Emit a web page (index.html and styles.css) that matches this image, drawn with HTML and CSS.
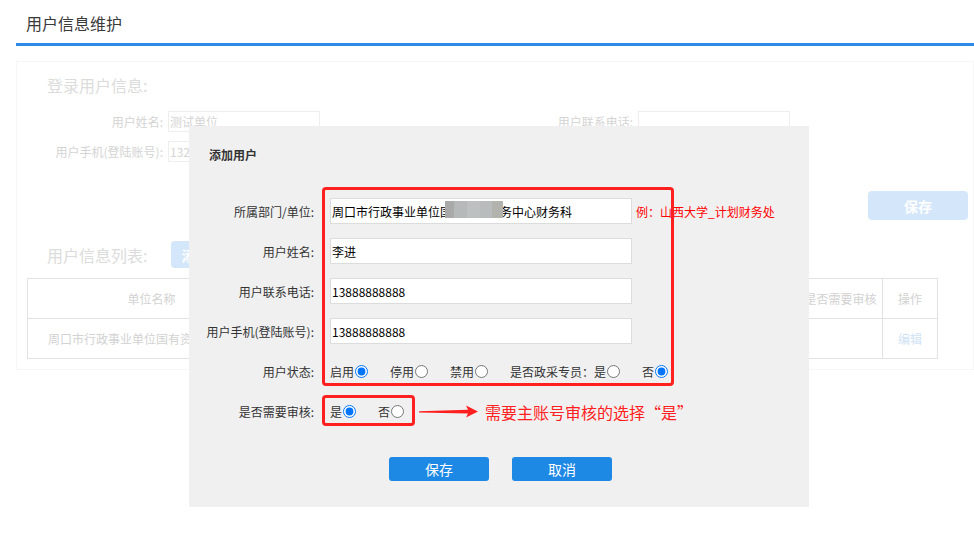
FILE: index.html
```html
<!DOCTYPE html>
<html lang="zh-CN">
<head>
<meta charset="utf-8">
<title>用户信息维护</title>
<link rel="stylesheet" href="styles.css">
</head>
<body>
<header class="page-head">
  <h1 class="page-title">用户信息维护</h1>
</header>

<section class="panel">
  <h2 class="sec-title">登录用户信息:</h2>
  <div class="login-grid">
    <span class="bg-label">用户姓名:</span>
    <input class="bg-input" type="text" value="测试单位">
    <span class="bg-label">用户联系电话:</span>
    <input class="bg-input" type="text" value="">
    <span class="bg-label">用户手机(登陆账号):</span>
    <input class="bg-input" type="text" value="13233333333">
  </div>
  <div class="save-row"><button class="btn-faded">保存</button></div>
  <div class="list-head">
    <h2 class="sec-title">用户信息列表:</h2>
    <button class="btn-faded btn-add">添加用户</button>
  </div>
  <table class="user-table">
    <colgroup>
      <col class="c-unit"><col><col><col><col class="c-audit"><col class="c-op">
    </colgroup>
    <thead>
      <tr><th>单位名称</th><th>用户姓名</th><th>联系电话</th><th>用户状态</th><th>是否需要审核</th><th>操作</th></tr>
    </thead>
    <tbody>
      <tr><td class="td-unit">周口市行政事业单位国有资产服务中心财务科</td><td>李进</td><td>13888888888</td><td>启用</td><td></td><td class="td-op">编辑</td></tr>
    </tbody>
  </table>
</section>

<div class="dialog">
  <h3 class="dlg-title">添加用户</h3>
  <div class="dlg-form">
    <div class="row">
      <span class="lbl">所属部门/单位:</span>
      <div class="field-wrap">
        <input class="field" type="text" value="周口市行政事业单位国有资产服务中心财务科">
        <span class="mosaic"><i class="m1"></i><i class="m2"></i><i class="m3"></i><i class="m4"></i><i class="m5"></i></span>
      </div>
      <span class="hint">例：山西大学_计划财务处</span>
    </div>
    <div class="row">
      <span class="lbl">用户姓名:</span>
      <input class="field" type="text" value="李进">
    </div>
    <div class="row">
      <span class="lbl">用户联系电话:</span>
      <input class="field" type="text" value="13888888888">
    </div>
    <div class="row">
      <span class="lbl">用户手机(登陆账号):</span>
      <input class="field" type="text" value="13888888888">
    </div>
    <div class="row">
      <span class="lbl">用户状态:</span>
      <div class="radios">
        <label class="opt">启用<input type="radio" name="st" checked></label>
        <label class="opt">停用<input type="radio" name="st"></label>
        <label class="opt">禁用<input type="radio" name="st"></label>
        <label class="opt">是否政采专员：是<input type="radio" name="zc"></label>
        <label class="opt">否<input type="radio" name="zc" checked></label>
      </div>
    </div>
    <div class="row">
      <span class="lbl">是否需要审核:</span>
      <div class="radios">
        <label class="opt">是<input type="radio" name="sh" checked></label>
        <label class="opt">否<input type="radio" name="sh"></label>
      </div>
    </div>
  </div>
  <div class="dlg-actions">
    <button class="btn">保存</button>
    <button class="btn">取消</button>
  </div>

  <div class="mark mark-a"></div>
  <div class="mark mark-b"></div>
  <svg class="arrow" width="60" height="16" viewBox="0 0 60 16"><polygon points="0,7.2 49,5.8 47,1.5 59,7.5 47,13.5 49,9.4 0,8.6" fill="#ff1f1f"/></svg>
  <span class="note">需要主账号审核的选择“是”</span>
</div>
</body>
</html>
```

FILE: styles.css
```css
* { box-sizing: border-box; }
html, body { margin: 0; padding: 0; }
body {
  width: 974px;
  height: 544px;
  overflow: hidden;
  position: relative;
  background: #fff;
  font-family: "Noto Sans CJK SC", "Microsoft YaHei", sans-serif;
  font-size: 12px;
  color: #333;
}

/* header */
.page-head {
  margin-left: 16px;
  height: 46px;
  border-bottom: 3px solid #2d8ae6;
  display: flex;
  align-items: center;
  padding: 2px 0 0 10px;
}
.page-title {
  margin: 0;
  font-size: 16px;
  font-weight: normal;
  line-height: 22px;
  color: #3a3a3a;
}

/* faded background panel */
.panel {
  margin: 15px 0 0 16px;
  height: 309px;
  border: 1px solid #f6f6f6;
  padding: 11px 5px 0 30px;
  color: #d6d6d6;
}
.sec-title {
  margin: 0;
  font-size: 16px;
  font-weight: normal;
  line-height: 24px;
  color: #dcdcdc;
}
.login-grid {
  margin: 14px 0 0 -30px;
  display: grid;
  grid-template-columns: 146px 152px 308px 152px;
  column-gap: 5px;
  row-gap: 9px;
  align-items: center;
}
.bg-label { text-align: right; color: #d4d4d4; white-space: nowrap; }
.bg-input {
  height: 21px;
  border: 1px solid #eeeeee;
  background: #fff;
  padding: 0 1px;
  font: inherit;
  color: #d4d4d4;
}
.save-row {
  display: flex;
  justify-content: flex-end;
  margin-top: 29px;
}
.btn-faded {
  width: 100px;
  height: 29px;
  border: 0;
  border-radius: 4px;
  background: #d4e7fa;
  color: #fff;
  font: bold 14px "Noto Sans CJK SC", sans-serif;
}
.list-head {
  margin-top: 21px;
  display: flex;
  align-items: center;
  gap: 24px;
}
.btn-add { width: auto; height: 27px; padding: 0 10px; }
.user-table {
  margin: 10px 0 0 -20px;
  width: 911px;
  border-collapse: collapse;
  table-layout: fixed;
  border: 1px solid #dddddd;
}
.c-unit { width: 248px; }
.c-audit { width: 84px; }
.c-op { width: 55px; }
.user-table th, .user-table td {
  height: 40px;
  border: 1px solid #e2e2e2;
  font-weight: normal;
  text-align: center;
  color: #d2d2d2;
  white-space: nowrap;
  overflow: hidden;
}
.user-table td.td-unit { text-align: left; padding-left: 20px; }
.user-table td.td-op { color: #cfe2f6; }

/* dialog */
.dialog {
  position: absolute;
  left: 189px;
  top: 126px;
  width: 620px;
  height: 381px;
  background: #f0f0f0;
  padding: 19px 0 0 0;
}
.dlg-title {
  margin: 0 0 0 20px;
  font-size: 12px;
  font-weight: bold;
  line-height: 20px;
  color: #333;
}
.dlg-form {
  margin-top: 33px;
  display: flex;
  flex-direction: column;
  gap: 14px;
}
.row {
  display: flex;
  align-items: center;
  height: 26px;
}
.lbl {
  width: 125px;
  flex: none;
  text-align: right;
  margin-right: 16px;
  color: #333;
  white-space: nowrap;
}
.field-wrap { position: relative; display: flex; }
.field {
  width: 302px;
  height: 26px;
  border: 1px solid #dcdcdc;
  background: #fff;
  padding: 0 1px;
  font: 12px "Noto Sans CJK SC", sans-serif;
  color: #000;
  outline: none;
}
.mosaic {
  position: absolute;
  left: 115px;
  top: 3px;
  height: 17px;
  display: flex;
}
.mosaic i { display: block; height: 100%; }
.mosaic .m1 { width: 9px; background: #a9a9a9; }
.mosaic .m2 { width: 13px; background: #b6b9b9; }
.mosaic .m3 { width: 13px; background: #bdc0c0; }
.mosaic .m4 { width: 12px; background: #b9bcbc; }
.mosaic .m5 { width: 11px; background: #b3b3ae; }
.hint {
  margin-left: 4px;
  color: #ff0000;
}
.radios {
  display: flex;
  align-items: center;
  gap: 22px;
}
.opt {
  display: flex;
  align-items: center;
  color: #333;
}
.opt input {
  margin: 0 0 0 1px;
  width: 13px;
  height: 13px;
}
.dlg-actions {
  margin-top: 33px;
  display: flex;
  justify-content: center;
  gap: 23px;
  padding-left: 3px;
}
.btn {
  width: 100px;
  height: 24px;
  border: 0;
  border-radius: 3px;
  background: #1e88e5;
  color: #fff;
  font: 14px "Noto Sans CJK SC", sans-serif;
  line-height: 24px;
  padding: 0;
}

/* annotations */
.mark {
  position: absolute;
  border: 3px solid #ff2020;
  border-radius: 4px;
}
.mark-a { left: 133px; top: 61px; width: 352px; height: 199px; }
.mark-b { left: 133px; top: 269px; width: 93px; height: 31px; }
.arrow { position: absolute; left: 230px; top: 278px; }
.note {
  position: absolute;
  left: 296px;
  top: 275px;
  font-size: 16px;
  line-height: 22px;
  color: #ff2020;
}
```
